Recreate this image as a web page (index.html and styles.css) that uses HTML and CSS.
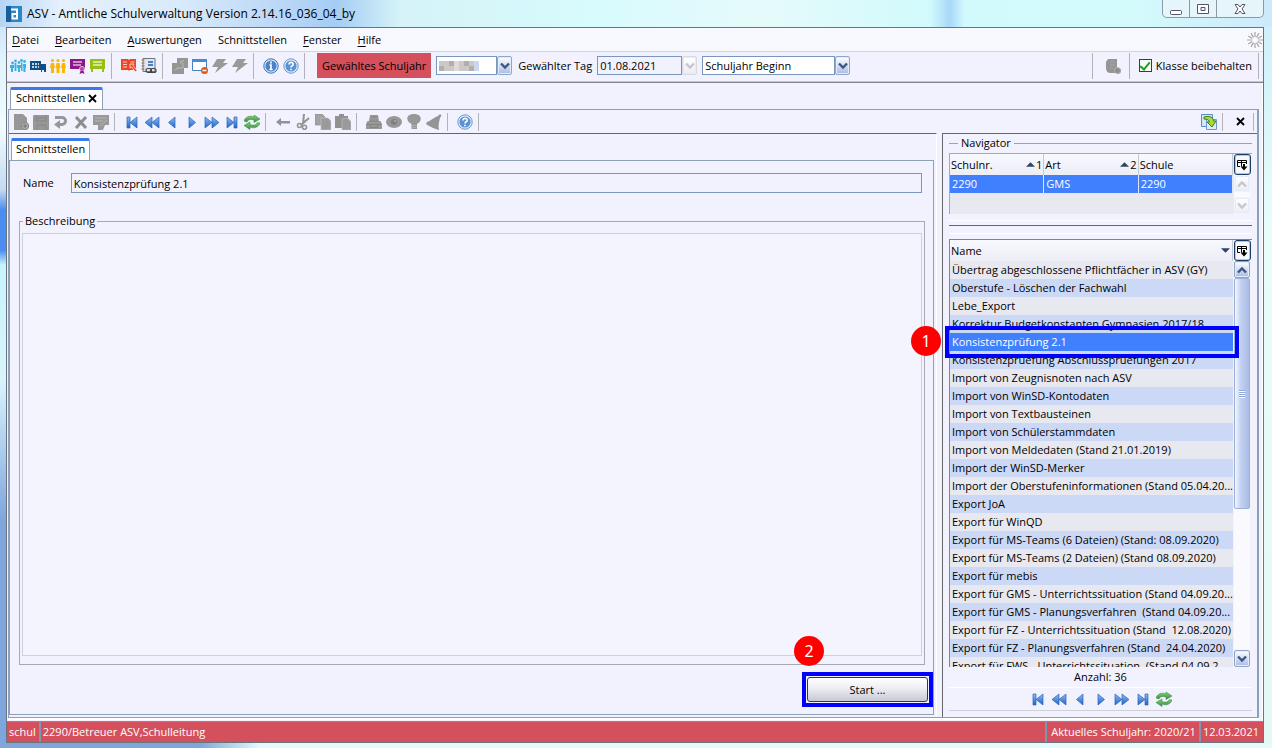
FILE: index.html
```html
<!DOCTYPE html>
<html lang="de">
<head>
<meta charset="utf-8">
<title>ASV - Amtliche Schulverwaltung</title>
<link rel="stylesheet" href="styles.css">
</head>
<body>
<svg class="defs" aria-hidden="true">
  <defs>
    <linearGradient id="gBlue" x1="0" y1="0" x2="0" y2="1"><stop offset="0" stop-color="#8fbcf4"/><stop offset="1" stop-color="#1f62c8"/></linearGradient>
    <linearGradient id="gGreen" x1="0" y1="0" x2="0" y2="1"><stop offset="0" stop-color="#8ccf80"/><stop offset="1" stop-color="#2f8f38"/></linearGradient>
    <symbol id="people" viewBox="0 0 16 16"><g fill="#35b4e0"><circle cx="2.500" cy="5" r="1.400"/><circle cx="5.500" cy="3" r="1.400"/><circle cx="9" cy="4.500" r="1.400"/><circle cx="11.500" cy="2.500" r="1.400"/><circle cx="14.500" cy="3.500" r="1.400"/><path d="M0 7h4v3H3v4H1v-4H0zM4.500 5h2v8h-2zM7 7h4v3h-1v4H8v-4H7zM11 4.500h1.500V13H11zM13 6h3v4h-.5v4h-2z"/></g></symbol>
    <symbol id="school" viewBox="0 0 16 16"><path d="M0 3h11v3h5v8h-2v-2h-2v2h-1v-2H0z" fill="#0d4f8b"/><path d="M2 6h2M5 6h2M8 6h1M2 9h2M5 9h2M8 9h1" stroke="#fff" stroke-width="1.500"/></symbol>
    <symbol id="staff" viewBox="0 0 16 16"><g fill="#fbb800"><circle cx="2.500" cy="2.500" r="1.600"/><circle cx="8" cy="2.500" r="1.600"/><circle cx="13.500" cy="2.500" r="1.600"/><path d="M1 5h3l1 5H4v5H1v-5H0zM6.500 5h3l1 5h-1v5h-3v-5h-1zM12 5h3l1 5h-1v5h-3v-5h-1z"/></g></symbol>
    <symbol id="cert" viewBox="0 0 16 16"><path d="M0 1h15v10H0z" fill="#8b1a86"/><path d="M3 4h9M3 7h8" stroke="#e4b6e2" stroke-width="1.300"/><circle cx="12" cy="11" r="2.600" fill="#b24cae" stroke="#fff" stroke-width=".6"/><path d="M10.500 13l-1 3 2.500-1 2.500 1-1-3z" fill="#8b1a86"/></symbol>
    <symbol id="board" viewBox="0 0 16 16"><path d="M0 1h15v10H0zM1 11h2v3H1zM12 11h2v3h-2z" fill="#98c010"/><path d="M3 4h9M3 7h9" stroke="#e6f2b8" stroke-width="1.300"/></symbol>
    <symbol id="redbook" viewBox="0 0 16 16"><path d="M0 1h7l1 1 1-1h6v11H9l-1 1-1-1H0z" fill="#ee4623"/><path d="M2 4h4M2 6.500h4M2 9h4M9.500 4h4" stroke="#ffd0c2" stroke-width="1.200"/><path d="M9 6h4l-1 1.500 4 5-1.500 1.500-4-5L9 10z" fill="#ee4623" stroke="#fff" stroke-width=".7"/></symbol>
    <symbol id="notebook" viewBox="0 0 16 16"><path d="M2 .5h12v13H2z" fill="#dfe6f0" stroke="#6c7688"/><path d="M.5 2h3M.5 5h3M.5 8h3M.5 11h3" stroke="#a07238" stroke-width="1.200"/><path d="M7 4h5M7 7h5" stroke="#4a82ca" stroke-width="2"/><rect x="5" y="10.500" width="5.500" height="4" rx="2" fill="none" stroke="#444" stroke-width="1.200"/><rect x="9.500" y="10.500" width="5.500" height="4" rx="2" fill="none" stroke="#444" stroke-width="1.200"/></symbol>
    <symbol id="copyG" viewBox="0 0 16 16"><path d="M5 0h11v10h-4v6H0V5h5z" fill="#959595"/><path d="M11 5v5H5M3 12l3-2M12 3H9v3" stroke="#bcbcbc" fill="none" stroke-width="1"/></symbol>
    <symbol id="windowDel" viewBox="0 0 16 16"><path d="M.5 1.500h14v11H.5z" fill="#fff" stroke="#4a7fc2"/><path d="M0 1h15v3H0z" fill="#4a88d8"/><circle cx="12.500" cy="12.500" r="3.500" fill="#e2571c"/><path d="M10.500 12.500h4" stroke="#fff" stroke-width="1.500"/></symbol>
    <symbol id="bolt" viewBox="0 0 16 16"><path d="M5 1h9l-3 4h5L3 15l3-6H0z" fill="#999"/></symbol>
    <symbol id="info" viewBox="0 0 16 16"><circle cx="8" cy="8" r="7.200" fill="#dce9f8" stroke="#3b70b4"/><circle cx="8" cy="8" r="5.600" fill="#4a83c8"/><path d="M8 3.500v2M6.500 7H8v4.500M6.300 11.500h3.400" stroke="#fff" stroke-width="1.700" fill="none"/></symbol>
    <symbol id="help" viewBox="0 0 16 16"><circle cx="8" cy="8" r="7.200" fill="#e2edf9" stroke="#6b96cc"/><circle cx="8" cy="8" r="5.600" fill="#5b92d2"/><path d="M6 6.500C6 3.500 10.300 3.800 10.200 6.300 10.200 8 8 7.600 8 9.500M8 10.700v1.600" stroke="#fff" stroke-width="1.600" fill="none"/></symbol>
    <symbol id="newG" viewBox="0 0 16 16"><path d="M1 0h9l4 4v12H1z" fill="#979797"/><circle cx="12" cy="12" r="3.700" fill="#aaa" stroke="#888"/><path d="M12 10v4M10 12h4" stroke="#777"/></symbol>
    <symbol id="saveG" viewBox="0 0 16 16"><path d="M1 1h15v15H0V2z" fill="#979797"/><path d="M3 1v6h10V1M4 16v-5h9v5M4 4h8" fill="none" stroke="#858585"/></symbol>
    <symbol id="undoG" viewBox="0 0 16 16"><path d="M2 3.500h7a3.500 3.500 0 010 7H6" fill="none" stroke="#979797" stroke-width="3"/><path d="M7 6v9l-6-4.500z" fill="#979797"/></symbol>
    <symbol id="xG" viewBox="0 0 16 16"><path d="M3 3l10 11M13 3L3 14" stroke="#8e8e8e" stroke-width="3"/></symbol>
    <symbol id="formG" viewBox="0 0 16 16"><path d="M0 1h16v10h-4l-2 5H5v-5H0z" fill="#999"/><path d="M2 4h12M2 7h8M7 12l7-6" stroke="#b4b4b4"/></symbol>
    <symbol id="first" viewBox="0 0 16 16"><path d="M3 3h3v11H3zM13 3v11L6 8.500z" fill="url(#gBlue)" stroke="#2a66b8" stroke-width=".7"/></symbol>
    <symbol id="rew" viewBox="0 0 16 16"><path d="M8 3v11L1 8.500zM15 3v11L8 8.500z" fill="url(#gBlue)" stroke="#2a66b8" stroke-width=".7"/></symbol>
    <symbol id="prev" viewBox="0 0 16 16"><path d="M11 3v11L4.500 8.500z" fill="url(#gBlue)" stroke="#2a66b8" stroke-width=".7"/></symbol>
    <symbol id="next" viewBox="0 0 16 16"><path d="M5 3v11l6.500-5.500z" fill="url(#gBlue)" stroke="#2a66b8" stroke-width=".7"/></symbol>
    <symbol id="fwd" viewBox="0 0 16 16"><path d="M1 3v11l7-5.500zM8 3v11l7-5.500z" fill="url(#gBlue)" stroke="#2a66b8" stroke-width=".7"/></symbol>
    <symbol id="last" viewBox="0 0 16 16"><path d="M10 3h3v11h-3zM3 3v11l7-5.500z" fill="url(#gBlue)" stroke="#2a66b8" stroke-width=".7"/></symbol>
    <symbol id="refresh" viewBox="0 0 16 16"><path d="M0 7c1-4 6-6 10-4V1l6 4-6 3.500V6C7 5 4 5 3 8z" fill="url(#gGreen)" stroke="#3d9346" stroke-width=".6"/><path d="M16 9c-1 4-6 6-10 4v2.500L0 11.500 6 8v2.500c3 1 6 1 7-1.800z" fill="url(#gGreen)" stroke="#3d9346" stroke-width=".6"/></symbol>
    <symbol id="backG" viewBox="0 0 16 16"><path d="M1 8l5-4v3h9v2.500H6V12z" fill="#929292"/></symbol>
    <symbol id="cutG" viewBox="0 0 16 16"><path d="M9 0L8 10M14 4L6 11" stroke="#929292" stroke-width="2"/><circle cx="4.500" cy="11.500" r="2" fill="none" stroke="#929292" stroke-width="1.600"/><circle cx="9.500" cy="13.200" r="2" fill="none" stroke="#929292" stroke-width="1.600"/></symbol>
    <symbol id="pagesG" viewBox="0 0 16 16"><path d="M0 0h7l3 3v8H0z" fill="#a2a2a2" stroke="#8c8c8c" stroke-width=".7"/><path d="M6 4h7l3 3v9H6z" fill="#9a9a9a" stroke="#c0c0c0" stroke-width=".7"/></symbol>
    <symbol id="pasteG" viewBox="0 0 16 16"><path d="M0 2h4V0h5v2h4v12H0z" fill="#929292"/><path d="M7 4.500h6l3 3V16H7z" fill="#9a9a9a" stroke="#bcbcbc" stroke-width=".7"/></symbol>
    <symbol id="printG" viewBox="0 0 16 16"><path d="M3 7l1-6h8l1 6h1.500L16 10v5H0v-5l1.500-3z" fill="#989898"/><path d="M1 10.500h14M4 7h8M5.500 3h5M4.500 10.500v3h7v-3" stroke="#808080" fill="none" stroke-width=".8"/></symbol>
    <symbol id="eyeG" viewBox="0 0 16 16"><ellipse cx="8" cy="8" rx="8" ry="6" fill="#989898"/><circle cx="8" cy="8" r="3" fill="#808080"/><circle cx="9" cy="7" r="1" fill="#aaa"/></symbol>
    <symbol id="bulbG" viewBox="0 0 16 16"><path d="M8 0c9 0 8 8 3 10v5H5.500v-5C0 8-1 0 8 0z" fill="#989898"/><path d="M5.500 11.500h5M5.500 13.500h5" stroke="#b4b4b4" stroke-width=".8"/></symbol>
    <symbol id="bellG" viewBox="0 0 16 16"><path d="M1 8C5 7 8 3 12 2l2-2 1.500 1.500L14 4c-1 4-2 8-1 12C9 15 4 13 0 10z" fill="#949494"/></symbol>
    <symbol id="scrollG" viewBox="0 0 16 16"><path d="M3 1h9v9a3 3 0 11-1 5H5c-3 0-4-3-4-6V4z" fill="#959595"/><circle cx="12.500" cy="12.500" r="3" fill="#8e8e8e" stroke="#bbb" stroke-width=".7"/><path d="M5 4h5M5 7h5M5 10h3" stroke="#aaa" stroke-width=".8"/></symbol>
    <symbol id="export" viewBox="0 0 16 16"><path d="M.5.500h11v12H.5z" fill="#d3e7fa" stroke="#5a8bc6"/><path d="M5.500 5.500h10v10h-10z" fill="#dcecf9" stroke="#6c9ad0"/><path d="M3 3c6-1.500 9 0 9.500 4H15l-4 6-5-5h2.500C8 6 6 5 3 5z" fill="#a4dd38" stroke="#3d7c1c"/></symbol>
    <symbol id="chev" viewBox="0 0 10 8"><path d="M1 1.500l4 4 4-4" fill="none" stroke="currentColor" stroke-width="2.400"/></symbol>
    <symbol id="chevUp" viewBox="0 0 10 8"><path d="M1 6.500l4-4 4 4" fill="none" stroke="currentColor" stroke-width="2.400"/></symbol>
    <symbol id="cols" viewBox="0 0 11 12"><path d="M3 7.500H.5v-6h9V5M.5 3.500h9M4.500 1.500v6" fill="none" stroke="#000"/><path d="M3.500 7.500h7L7 11.500zM6 5h2v3H6z"/></symbol>
  </defs>
</svg>

<div class="window">
  <header class="titlebar">
    <svg class="logo" viewBox="0 0 16 16"><path d="M0 0h16v16H0z" fill="#2a86c4"/><path d="M0 0h5v16H0z" fill="#165f9c"/><path d="M5 3.500h6v9H6.500V8H11" fill="none" stroke="#fff" stroke-width="2"/></svg>
    <h1>ASV - Amtliche Schulverwaltung Version 2.14.16_036_04_by</h1>
    <div class="controls">
      <button aria-label="Minimieren"><svg width="14" height="14" viewBox="0 0 14 14"><rect x="1.500" y="8.500" width="11" height="4" rx="1" fill="#fff" stroke="#535666"/></svg></button>
      <button aria-label="Maximieren"><svg width="14" height="14" viewBox="0 0 14 14"><path d="M1.500 2.500h11v9h-11zM5 5.500h4v3H5z" fill="#fff" fill-rule="evenodd" stroke="#535666"/></svg></button>
      <button class="close" aria-label="Schließen"><svg width="14" height="14" viewBox="0 0 14 14"><path d="M2 2.500h3l2 2.500 2-2.500h3L9 7l3 4.500H9L7 9l-2 2.500H2L5 7z" fill="#fff" stroke="#535666"/></svg></button>
    </div>
  </header>

  <div class="client">
    <nav class="menubar">
      <button><u>D</u>atei</button><button><u>B</u>earbeiten</button><button><u>A</u>uswertungen</button><button>Schnittstellen</button><button><u>F</u>enster</button><button><u>H</u>ilfe</button>
      <svg class="spinner" viewBox="0 0 16 16" aria-hidden="true"><path d="M8 0v5M8 11v5M0 8h5M11 8h5M4 1.100l2.500 4.300M9.500 10.600l2.500 4.300M1.100 4l4.300 2.500M10.600 9.500l4.300 2.500M1.100 12l4.300-2.500M10.600 6.500L14.900 4M4 14.900l2.500-4.300M9.500 5.400L12 1.100" stroke="#a8a8a8" stroke-width="1.200"/></svg>
    </nav>

    <div class="toolbar main-tools">
      <button class="ib" aria-label="Schüler"><svg><use href="#people"/></svg></button>
      <button class="ib" aria-label="Schule"><svg><use href="#school"/></svg></button>
      <button class="ib" aria-label="Lehrkräfte"><svg><use href="#staff"/></svg></button>
      <button class="ib" aria-label="Zeugnisse"><svg><use href="#cert"/></svg></button>
      <button class="ib" aria-label="Unterricht"><svg><use href="#board"/></svg></button>
      <i class="sep"></i>
      <button class="ib" aria-label="Berichte"><svg><use href="#redbook"/></svg></button>
      <button class="ib" aria-label="Notenbuch"><svg><use href="#notebook"/></svg></button>
      <i class="sep"></i>
      <button class="ib" aria-label="Fenster kopieren"><svg><use href="#copyG"/></svg></button>
      <button class="ib" aria-label="Fenster schließen"><svg><use href="#windowDel"/></svg></button>
      <button class="ib" aria-label="Aktion 1"><svg><use href="#bolt"/></svg></button>
      <button class="ib" aria-label="Aktion 2"><svg><use href="#bolt"/></svg></button>
      <i class="sep"></i>
      <button class="ib" aria-label="Info"><svg><use href="#info"/></svg></button>
      <button class="ib" aria-label="Hilfe"><svg><use href="#help"/></svg></button>
      <i class="sep"></i>
      <label class="year" for="year">Gewähltes Schuljahr</label>
      <span class="combo combo-year"><select id="year"><option></option></select><span class="arrow"><svg><use href="#chev"/></svg></span>
        <span class="mosaic"><i></i><i></i><i></i><i></i><i></i><i></i><i></i><i></i><i></i><i></i><i></i><i></i><i></i><i></i><i></i><i></i></span></span>
      <label class="day" for="day">Gewählter Tag</label>
      <span class="combo combo-day"><input id="day" value="01.08.2021"><span class="arrow off"><svg><use href="#chev"/></svg></span></span>
      <span class="combo combo-term"><select aria-label="Zeitpunkt"><option>Schuljahr Beginn</option></select><span class="arrow"><svg><use href="#chev"/></svg></span></span>
      <span class="grow"></span>
      <i class="sep wide"></i>
      <button class="ib" aria-label="Protokoll"><svg><use href="#scrollG"/></svg></button>
      <i class="sep"></i>
      <label class="keep"><input type="checkbox" checked>Klasse beibehalten</label>
      <i class="sep"></i>
    </div>

    <div class="workspace">
      <div class="tabs outer"><button class="tab">Schnittstellen <svg class="x" viewBox="0 0 9 9"><path d="M1 1l7 7M8 1L1 8" stroke="#000" stroke-width="1.800"/></svg></button></div>
      <div class="document">
        <div class="toolbar doc-tools">
          <button class="ib" aria-label="Neu"><svg><use href="#newG"/></svg></button>
          <button class="ib" aria-label="Speichern"><svg><use href="#saveG"/></svg></button>
          <button class="ib" aria-label="Rückgängig"><svg><use href="#undoG"/></svg></button>
          <button class="ib" aria-label="Löschen"><svg><use href="#xG"/></svg></button>
          <button class="ib" aria-label="Bearbeiten"><svg><use href="#formG"/></svg></button>
          <i class="sep"></i>
          <button class="ib" aria-label="Erster"><svg><use href="#first"/></svg></button>
          <button class="ib" aria-label="Seite zurück"><svg><use href="#rew"/></svg></button>
          <button class="ib" aria-label="Zurück"><svg><use href="#prev"/></svg></button>
          <button class="ib" aria-label="Vor"><svg><use href="#next"/></svg></button>
          <button class="ib" aria-label="Seite vor"><svg><use href="#fwd"/></svg></button>
          <button class="ib" aria-label="Letzter"><svg><use href="#last"/></svg></button>
          <button class="ib" aria-label="Aktualisieren"><svg><use href="#refresh"/></svg></button>
          <i class="sep"></i>
          <button class="ib" aria-label="Wechseln"><svg><use href="#backG"/></svg></button>
          <button class="ib" aria-label="Ausschneiden"><svg><use href="#cutG"/></svg></button>
          <button class="ib" aria-label="Kopieren"><svg><use href="#pagesG"/></svg></button>
          <button class="ib" aria-label="Einfügen"><svg><use href="#pasteG"/></svg></button>
          <i class="sep"></i>
          <button class="ib" aria-label="Drucken"><svg><use href="#printG"/></svg></button>
          <button class="ib" aria-label="Vorschau"><svg><use href="#eyeG"/></svg></button>
          <button class="ib" aria-label="Hinweis"><svg><use href="#bulbG"/></svg></button>
          <button class="ib" aria-label="Erinnerung"><svg><use href="#bellG"/></svg></button>
          <i class="sep"></i>
          <button class="ib" aria-label="Hilfe zum Modul"><svg><use href="#help"/></svg></button>
          <i class="sep"></i>
          <span class="grow"></span>
          <button class="ib" aria-label="Ansicht wechseln"><svg><use href="#export"/></svg></button>
          <i class="sep"></i>
          <button class="ib" aria-label="Modul schließen"><svg class="x" viewBox="0 0 9 9"><path d="M1 1l7 7M8 1L1 8" stroke="#000" stroke-width="1.800"/></svg></button>
          <i class="sep"></i>
        </div>

        <div class="split">
          <main class="editor">
            <div class="tabs inner"><button class="tab">Schnittstellen</button></div>
            <div class="pane">
              <div class="field"><label for="name">Name</label><input id="name" value="Konsistenzprüfung 2.1"></div>
              <fieldset class="desc"><legend><label for="desc">Beschreibung</label></legend><textarea id="desc"></textarea></fieldset>
              <div class="actions"><span class="mark start-mark"><button class="start">Start ...</button><b class="badge">2</b></span></div>
            </div>
          </main>

          <aside class="navigator">
            <h2>Navigator</h2>
            <div class="grid schools">
              <table>
                <thead><tr><th>Schulnr.<span class="sort"><svg viewBox="0 0 8 4"><path d="M0 4l4-4 4 4z"/></svg>1</span></th><th>Art<span class="sort"><svg viewBox="0 0 8 4"><path d="M0 4l4-4 4 4z"/></svg>2</span></th><th>Schule</th></tr></thead>
                <tbody><tr class="sel"><td>2290</td><td>GMS</td><td>2290</td></tr></tbody>
              </table>
              <div class="side"><button class="cols" aria-label="Spalten wählen"><svg><use href="#cols"/></svg></button><span class="scroll idle"><span class="arrow off"><svg><use href="#chevUp"/></svg></span><span class="arrow off"><svg><use href="#chev"/></svg></span></span></div>
            </div>
            <div class="divider"></div>
            <div class="grid modules">
              <div class="clip">
              <table>
                <thead><tr><th>Name<span class="sort"><svg viewBox="0 0 8 4"><path d="M0 0h8L4 4z"/></svg></span></th></tr></thead>
                <tbody>
                  <tr><td>Übertrag abgeschlossene Pflichtfächer in ASV (GY)</td></tr>
                  <tr><td>Oberstufe - Löschen der Fachwahl</td></tr>
                  <tr><td>Lebe_Export</td></tr>
                  <tr><td>Korrektur Budgetkonstanten Gymnasien 2017/18</td></tr>
                  <tr class="sel"><td>Konsistenzprüfung 2.1</td></tr>
                  <tr><td>Konsistenzpruefung Abschlusspruefungen 2017</td></tr>
                  <tr><td>Import von Zeugnisnoten nach ASV</td></tr>
                  <tr><td>Import von WinSD-Kontodaten</td></tr>
                  <tr><td>Import von Textbausteinen</td></tr>
                  <tr><td>Import von Schülerstammdaten</td></tr>
                  <tr><td>Import von Meldedaten (Stand 21.01.2019)</td></tr>
                  <tr><td>Import der WinSD-Merker</td></tr>
                  <tr><td>Import der Oberstufeninformationen (Stand 05.04.20...</td></tr>
                  <tr><td>Export JoA</td></tr>
                  <tr><td>Export für WinQD</td></tr>
                  <tr><td>Export für MS-Teams (6 Dateien) (Stand: 08.09.2020)</td></tr>
                  <tr><td>Export für MS-Teams (2 Dateien) (Stand 08.09.2020)</td></tr>
                  <tr><td>Export für mebis</td></tr>
                  <tr><td>Export für GMS - Unterrichtssituation (Stand 04.09.20...</td></tr>
                  <tr><td>Export für GMS - Planungsverfahren&nbsp; (Stand 04.09.20...</td></tr>
                  <tr><td>Export für FZ - Unterrichtssituation (Stand&nbsp; 12.08.2020)</td></tr>
                  <tr><td>Export für FZ - Planungsverfahren (Stand&nbsp; 24.04.2020)</td></tr>
                  <tr><td>Export für FWS - Unterrichtssituation&nbsp; (Stand 04.09.2...</td></tr>
                </tbody>
              </table>
              </div>
              <div class="side"><button class="cols" aria-label="Spalten der Liste wählen"><svg><use href="#cols"/></svg></button><span class="scroll"><span class="arrow"><svg><use href="#chevUp"/></svg></span><span class="thumb"></span><span class="grow"></span><span class="arrow"><svg><use href="#chev"/></svg></span></span></div>
              <span class="mark row-mark"><b class="badge">1</b></span>
            </div>
            <p class="count">Anzahl: 36</p>
            <div class="pager">
              <button class="ib" aria-label="Erster Eintrag"><svg><use href="#first"/></svg></button>
              <button class="ib" aria-label="Seite zurück in der Liste"><svg><use href="#rew"/></svg></button>
              <button class="ib" aria-label="Voriger Eintrag"><svg><use href="#prev"/></svg></button>
              <button class="ib" aria-label="Nächster Eintrag"><svg><use href="#next"/></svg></button>
              <button class="ib" aria-label="Seite vor in der Liste"><svg><use href="#fwd"/></svg></button>
              <button class="ib" aria-label="Letzter Eintrag"><svg><use href="#last"/></svg></button>
              <button class="ib" aria-label="Liste aktualisieren"><svg><use href="#refresh"/></svg></button>
            </div>
          </aside>
        </div>
      </div>
    </div>

    <footer class="status"><span>schul</span><span class="grow">2290/Betreuer ASV,Schulleitung</span><span class="cur">Aktuelles Schuljahr: 2020/21</span><span class="date">12.03.2021</span></footer>
  </div>
</div>
</body>
</html>
```
FILE: styles.css
```css
* { box-sizing: border-box; }
body { margin: 0; font: 11px/18px "Open Sans", "Noto Sans", sans-serif; color: #000; }
button, input, select, textarea { font: inherit; color: inherit; margin: 0; }
button { border: 0; padding: 0; background: none; }
.defs { position: absolute; width: 0; height: 0; }
.grow { flex: 1; }

.window {
  height: 100vh; display: flex; flex-direction: column; padding: 0 8px 5px 6px;
  background:
    linear-gradient(90deg, #7fa6dc 0 200px, #e4fbfb 260px) bottom / 100% 5px no-repeat,
    linear-gradient(180deg, #c4dcf8 0, #e0f4fc 60px, #f0fcff 130px, #c4d8f0 190px, #4a8cf0 210px, #4a8cf0 250px, #c8f4fc 265px, #d8f4fc 380px, #7fa6dc 520px, #7fa6dc 100%) left / 6px 100% no-repeat,
    linear-gradient(180deg, #cdeefa, #e8fcfb 30%, #e4f8f6);
}
.titlebar {
  height: 27px; flex: none; display: flex; align-items: center; gap: 5px; margin: 0 -8px 0 -6px; padding: 0 8px 0 6px;
  background: linear-gradient(90deg, #b6d4f4 0, #e4f1fc 60px, #d9eafa 180px, #b4d4f6 300px, #a4ccf4 335px, #d5f3f8 400px, #d8fbfd 600px, #e6fafb 760px, #d2fafc 930px, #a8d8f8 950px, #d2fafc 965px, #d4fbfc 1130px, #cdeafb 100%);
}
.logo { width: 16px; height: 16px; }
h1 { flex: 1; margin: 0; font-size: 12px; font-weight: 400; }
.controls { align-self: flex-start; display: flex; height: 18px; border: 1px solid #8a9aa4; border-top: 0; border-radius: 0 0 5px 5px; background: #e6f5fa; }
.controls button { width: 27px; display: grid; place-items: center; border-right: 1px solid #8a9aa4; }
.controls .close { width: 46px; border: 0; }

.client { flex: 1; min-height: 0; display: flex; flex-direction: column; border: 1px solid #6c737c; background: #f2f2ff; }
.menubar { display: flex; align-items: center; height: 24px; padding: 0 0 0 5px; gap: 16px; background: #f8f8ff; border-bottom: 1px solid #d2d2e2; }
.menubar u { text-underline-offset: 2px; }
.spinner { width: 16px; height: 16px; margin-left: auto; }
.toolbar { display: flex; align-items: center; flex: none; }
.main-tools { height: 31px; padding: 0 4px 3px 1px; border-bottom: 1px solid #84848c; box-shadow: inset 0 -1px #c6c6cf; }
.ib { width: 20px; height: 20px; flex: none; display: grid; place-items: center; }
.ib svg { width: 16px; height: 16px; }
.ib .x, .tab .x { width: 9px; height: 9px; }
.sep { width: 1px; height: 26px; margin: 0 7px 0 3px; background: #b2b2b8; flex: none; }
.sep.wide { margin-right: 10px; }
.wide ~ .sep { margin-left: 6px; }
.sep:last-child { margin-right: 0; }
.year { margin-left: 5px; padding: 0 5px; line-height: 25px; background: #d4505c; white-space: nowrap; }
.day { margin-left: 6px; white-space: nowrap; }
.combo { position: relative; display: flex; height: 19px; flex: none; margin-left: 5px; }
.combo select, .combo input { flex: 1; min-width: 0; appearance: none; border: 1px solid #7a96bd; border-radius: 0; background: #fff; padding: 0 2px; line-height: 17px; }
.combo input { background: #f2f2ff; }
.combo-year { width: 76px; }
.combo-day { width: 100px; }
.combo-term { width: 148px; }
.arrow { width: 15px; flex: none; display: grid; place-items: center; border: 1px solid #8ea6cc; border-radius: 2px; background: linear-gradient(#fff, #a9bce4); box-shadow: inset 0 0 0 1px #e4ecfa; color: #3c5684; }
.arrow svg { width: 10px; height: 8px; }
.arrow.off { border-color: #d8d8e2; background: linear-gradient(#fff, #ececf4); color: #c6c6d0; }
.mosaic { position: absolute; left: 3px; top: 5px; display: grid; grid-template-columns: repeat(8, 5px); grid-auto-rows: 5px; }
.mosaic i { background: #ccc8c6; }
.mosaic i:nth-child(3n) { background: #b0aeb2; }
.mosaic i:nth-child(4n) { background: #dedad8; }
.mosaic i:nth-child(8n) { background: #cbd9ee; }
.keep { display: flex; align-items: center; gap: 4px; margin: 0 0 0 2px; white-space: nowrap; }
.keep input { appearance: none; width: 13px; height: 13px; display: grid; place-items: center; border: 1px solid #1c4070; background: #f6fbf6; }
.keep input:checked::after { content: ""; width: 4px; height: 8px; margin-bottom: 2px; border: solid #21a121; border-width: 0 2px 2px 0; transform: rotate(40deg); }

.workspace { flex: 1; min-height: 0; display: flex; flex-direction: column; padding: 4px 3px 3px 1px; border-right: 1px solid #fff; }
.tabs { display: flex; flex: none; }
.tab { display: flex; align-items: center; gap: 3px; height: 22px; padding: 0 5px 3px; border: 1px solid #8ca0b8; border-top: 3px solid #3c78e8; border-bottom: 0; border-radius: 2px 2px 0 0; background: #fff; white-space: nowrap; }
.outer { padding-left: 2px; }
.document { flex: 1; min-height: 0; display: flex; flex-direction: column; border: 1px solid #8ca0b8; border-right-width: 2px; box-shadow: 0 2px #fff; }
.doc-tools { height: 23px; padding: 0 3px 0 2px; }
.doc-tools .sep { height: 18px; }
.split { flex: 1; min-height: 0; display: flex; gap: 5px; }
.editor { flex: 1; min-width: 0; display: flex; flex-direction: column; padding: 4px 2px 2px 0; border-top: 1px solid #66666c; border-right: 1px solid #fff; }
.inner { padding-left: 2px; }
.inner .tab { padding: 0 4px 3px; }
.pane { flex: 1; min-height: 0; display: flex; flex-direction: column; border: 1px solid #8ca0b8; padding: 12px 0 7px 9px; }
.field { display: flex; align-items: center; gap: 17px; padding: 0 11px 0 4px; }
.field input { flex: 1; min-width: 0; height: 20px; padding: 0 2px; border: 1px solid #7a96bd; background: #f2f2ff; }
.desc { flex: 1; min-height: 0; display: flex; margin: 19px 8px 0 0; padding: 3px 2px 8px; border: 1px solid #a8a8b2; }
.desc legend { padding: 0 2px; margin-left: 1px; }
.desc textarea { flex: 1; resize: none; border: 1px solid #d0d0dc; background: #f4f4ff; }
.actions { display: flex; justify-content: flex-end; margin-top: 7px; }
.mark { border: 4px solid #00f; }
.start-mark { position: relative; display: flex; }
.start { width: 121px; height: 25px; margin: 1px; border: 1px solid #1c3c68; border-radius: 3px; background: linear-gradient(#fff, #f0f0f5 40%, #c9c9d6); }
.badge { position: absolute; width: 30px; height: 30px; border-radius: 50%; background: #f00; color: #fff; font: 16px/30px "Noto Sans", sans-serif; text-align: center; }
.start-mark .badge { left: -12px; top: -40px; }

.navigator { width: 315px; flex: none; display: flex; flex-direction: column; padding: 0 5px 6px 6px; border: solid #66666c; border-width: 1px 0 0 1px; }
h2 { display: flex; align-items: center; gap: 3px; margin: 0; font-size: 11px; font-weight: 400; line-height: 18px; }
h2::before { content: ""; width: 9px; height: 1px; background: #a0a0aa; }
h2::after { content: ""; flex: 1; height: 1px; background: #a0a0aa; }
.grid { position: relative; display: flex; gap: 1px; }
.grid table { width: 100%; border-collapse: separate; border-spacing: 0; table-layout: fixed; }
.grid th { position: relative; height: 21px; padding: 0 1px; text-align: left; font-weight: 400; border-right: 1px solid #c8c8d0; background: linear-gradient(#f8f8ff, #ededf5); }
.grid td { height: 18px; padding: 0 2px; white-space: nowrap; overflow: hidden; line-height: 18px; }
.sort { float: right; display: flex; align-items: center; height: 18px; }
.sort svg { width: 9px; height: 5px; margin-right: 1px; fill: #2c4468; }
.schools { height: 61px; margin-top: 1px; border: solid #a8a8b2; border-width: 1px 0 0 1px; background: linear-gradient(90deg, #e8e8f0 284px, #f2f2ff 284px); }
.schools table { align-self: flex-start; }
.schools td { border-right: 1px solid #dde6fa; }
.sel td, .modules tbody tr.sel td { background: #4080ff; color: #fff; }
.side { width: 18px; flex: none; display: flex; flex-direction: column; }
.cols { width: 17px; height: 21px; flex: none; display: grid; place-items: center; border: 1px solid #1c3c68; border-radius: 3px; background: #f8f8fc; box-shadow: inset 0 0 0 1px #b8c6e2; }
.cols svg { width: 11px; height: 12px; }
.scroll { flex: 1; min-height: 0; display: flex; flex-direction: column; width: 16px; background: #fafafe; }
.scroll .arrow { width: 16px; height: 17px; }
.idle { justify-content: space-between; }
.idle .arrow { border-color: #f2f2fa; }
.thumb { height: 231px; border: 1px solid #9ab0da; border-radius: 2px; background: repeating-linear-gradient(#90a8d4 0 1px, #fff 1px 2px) center / 6px 8px no-repeat, linear-gradient(90deg, #f4f8ff, #c4d2f2 40%, #a9bce6); }
.divider { height: 14px; flex: none; margin: 6px 0 5px; border-top: 1px solid #fff; border-bottom: 1px solid #fff; background: linear-gradient(#66666c, #66666c) 0 4px / 100% 1px no-repeat; }
.modules { flex: 1; min-height: 0; border: solid #84848c; border-width: 1px 0 0 1px; }
.clip { flex: 1; min-width: 0; overflow: hidden; }
.modules tbody td { background: #e8e8f0; }
.modules tbody tr:nth-child(even) td { background: #ccd9f6; }
.row-mark { position: absolute; left: -5px; top: 86px; width: 294px; height: 32px; }
.row-mark .badge { left: -38px; top: -4px; }
.count { margin: 0; text-align: center; line-height: 20px; border-bottom: 1px solid #fff; }
.pager { display: flex; justify-content: center; gap: 1px; padding: 1px 0; border-bottom: 1px solid #d0d0dc; }

.status { display: flex; gap: 2px; flex: none; height: 21px; border-top: 1px solid #7890ac; background: #7f95b4; color: #fff; line-height: 20px; white-space: nowrap; }
.status span { padding: 0 3px 0 2px; background: #d4505c; }
.status .cur { padding: 0 3px 0 4px; }
.status .date { padding: 0 4px 0 2px; }
```
